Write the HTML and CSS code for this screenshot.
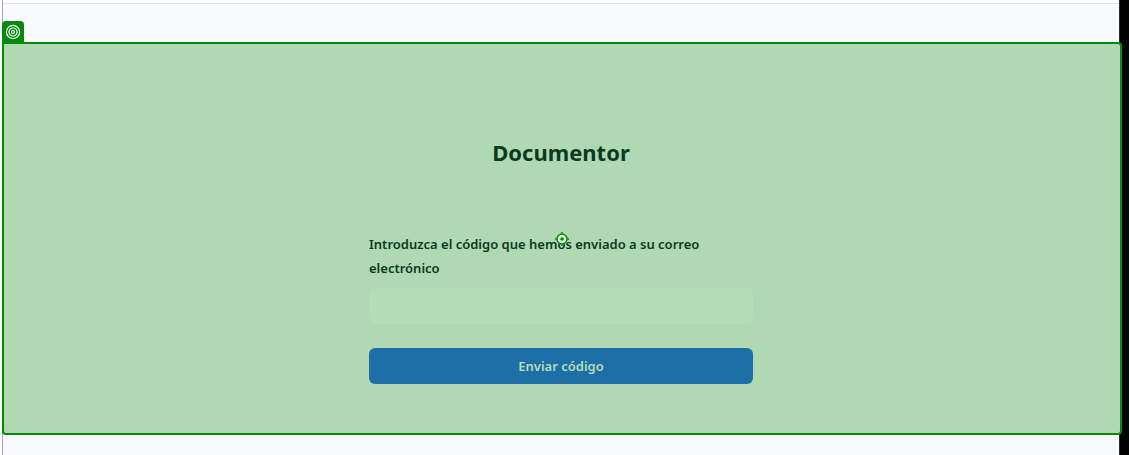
FILE: index.html
```html
<!DOCTYPE html>
<html lang="es">
<head>
<meta charset="utf-8">
<meta name="viewport" content="width=device-width, initial-scale=1">
<title>Documentor</title>
<link rel="stylesheet" href="styles.css">
</head>
<body>
<div class="frame">
  <div class="screen">
    <header class="topbar"></header>
    <div class="tag">
      <svg class="tag-icon" viewBox="0 0 16 16" fill="none" stroke="#fff" aria-hidden="true">
        <circle cx="8" cy="8" r="6.6" stroke-width="1.2"/>
        <circle cx="8" cy="8" r="4" stroke-width="1.2"/>
        <circle cx="8" cy="8" r="1.5" stroke-width="1.2"/>
      </svg>
    </div>
    <main class="region">
      <h1 class="title">Documentor</h1>
      <form class="form">
        <label class="label" for="code">Introduzca el código que hemos enviado a su correo electrónico</label>
        <input class="input" id="code" type="text">
        <button class="button" type="button">Enviar código</button>
      </form>
      <svg class="target" viewBox="0 0 14 14" fill="none" stroke="#008c0a" aria-hidden="true">
        <circle cx="7" cy="7" r="5" fill="#dff3df" stroke-width="1.4"/>
        <path d="M7 0v2M7 12v2M0 7h2M12 7h2" stroke-width="1.4"/>
        <circle cx="7" cy="7" r="1.8" fill="#008c0a" stroke="none"/>
      </svg>
    </main>
  </div>
</div>
</body>
</html>
```
FILE: styles.css
```css
* {
  box-sizing: border-box;
}

body {
  margin: 0;
  background: #fff;
  font-family: "Segoe UI", "Noto Sans", "Open Sans", sans-serif;
  color: #0b3b1e;
}

.frame {
  display: flex;
  min-height: 100vh;
  padding-left: 2px;
  border-right: 9px solid #000;
}

.screen {
  flex: 1;
  display: flex;
  flex-direction: column;
  background: #f9fafc;
  border-left: 1px solid #a9a9a9;
  border-right: 1px solid #2b2b2f;
}

.topbar {
  height: 4px;
  margin-bottom: 17px;
  background: #fcfdfe;
  border-bottom: 1px solid #dfe1e4;
}

.tag {
  display: flex;
  align-items: center;
  justify-content: center;
  width: 22px;
  height: 21px;
  margin-left: -1px;
  background: #008c0a;
  border-radius: 4px 4px 0 0;
}

.tag-icon {
  width: 16px;
  height: 16px;
}

.region {
  position: relative;
  display: flex;
  flex-direction: column;
  align-items: center;
  gap: 64px;
  margin: 0 -3px 0 -1px;
  padding: 92px 26px 49px 24px;
  background: #b0d8b3;
  border: 2px solid #008c0a;
  border-radius: 0 4px 4px 4px;
}

.title {
  margin: 0;
  font-size: 22px;
  line-height: 32px;
  font-weight: 700;
}

.form {
  display: flex;
  flex-direction: column;
  width: 100%;
  max-width: 384px;
}

.label {
  margin-bottom: 8px;
  font-size: 13px;
  line-height: 24px;
  font-weight: 600;
}

.input {
  height: 36px;
  margin-bottom: 24px;
  padding: 6px 12px;
  font: inherit;
  font-size: 13px;
  color: inherit;
  background: #b4deb6;
  border: 0;
  border-radius: 6px;
}

.button {
  padding: 6px 12px;
  font-family: inherit;
  font-size: 13px;
  line-height: 24px;
  font-weight: 600;
  color: #b4deb6;
  background: #1d6fa8;
  border: 0;
  border-radius: 6px;
}

.target {
  position: absolute;
  top: 50%;
  left: 50%;
  width: 14px;
  height: 14px;
  margin: -7px 0 0 -7px;
}
```
